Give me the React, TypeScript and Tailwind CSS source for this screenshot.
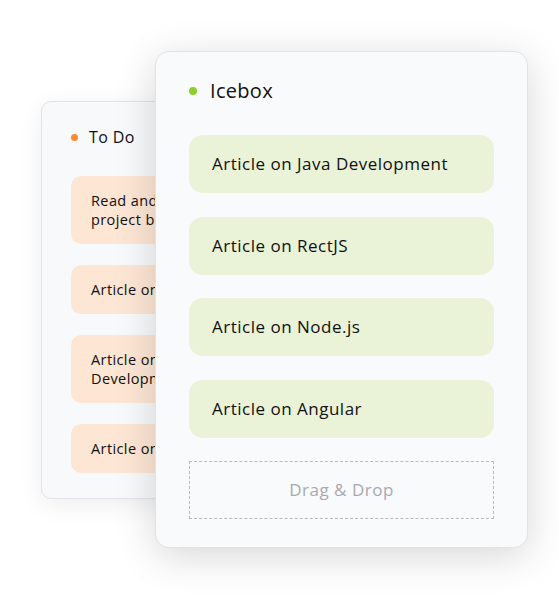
import React from 'react'

const icebox = ['Article on Java Development', 'Article on RectJS', 'Article on Node.js', 'Article on Angular']
const todo = [
  'Read and understand the project brief',
  'Article on Vue.js',
  'Article on Python Development',
  'Article on Django',
]

const font = { fontFamily: '"Open Sans", Lato, sans-serif' }

export default function App() {
  return (
    <div className="w-[559px] h-[600px] bg-white overflow-hidden" style={font}>
      <div className="grid">
        {/* To Do (behind) */}
        <div className="col-start-1 row-start-1 self-start ml-[41px] mt-[101px] w-[300px] h-[398px] rounded-[10px] border border-[#e2e3e7] bg-[#f8f9fb] shadow-[0_6px_24px_rgba(0,0,0,0.07)] pl-[29px] pt-[23px] overflow-hidden">
          <div className="flex items-center gap-[11px] h-[24px]">
            <span className="w-[7px] h-[7px] rounded-full bg-[#ff8a2b]" />
            <span className="text-[16px] tracking-[0.4px] text-[#111]">To Do</span>
          </div>
          <div className="flex flex-col gap-[21px] mt-[27px] w-[240px]">
            {todo.map(t => (
              <div key={t} className="rounded-[10px] bg-[#fde6d4] px-[20px] py-[15px] text-[14.5px] tracking-[0.4px] leading-[19px] text-[#111]">
                {t}
              </div>
            ))}
          </div>
        </div>

        {/* Icebox (front) */}
        <div className="col-start-1 row-start-1 self-start ml-[155px] mt-[51px] w-[373px] h-[497px] rounded-[14px] border border-[#e1e2e6] bg-[#f9fafc] shadow-[0_8px_40px_rgba(0,0,0,0.16)] px-[33px] pt-[25px]">
          <div className="flex items-center gap-[13px] h-[28px]">
            <span className="w-[8px] h-[8px] rounded-full bg-[#8fcf2a]" />
            <span className="text-[20px] tracking-[0.3px] text-[#111]">Icebox</span>
          </div>
          <div className="flex flex-col gap-[23.5px] mt-[30px]">
            {icebox.map(t => (
              <div key={t} className="h-[58px] flex items-center rounded-[14px] bg-[#eaf3d7] px-[23px] text-[17px] tracking-[0.5px] text-[#111]">
                {t}
              </div>
            ))}
            <div className="h-[58px] flex items-center justify-center border border-dashed border-[#b9b9bd] text-[17px] tracking-[0.5px] text-[#a9a9ad]">
              Drag &amp; Drop
            </div>
          </div>
        </div>
      </div>
    </div>
  )
}
